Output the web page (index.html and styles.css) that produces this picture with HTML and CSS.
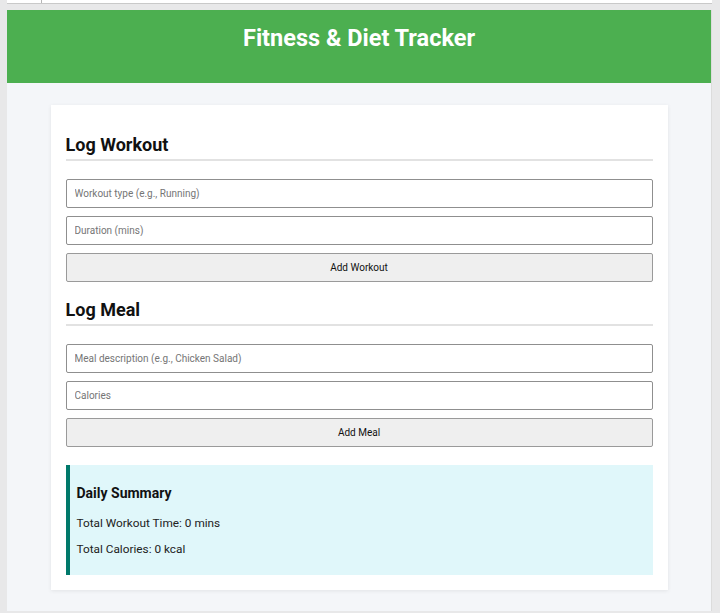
FILE: index.html
```html
<!DOCTYPE html>
<html lang="en">
<head>
<meta charset="utf-8">
<title>Fitness &amp; Diet Tracker</title>
<link rel="stylesheet" href="styles.css">
</head>
<body>
<div class="topstrip"><div class="topstrip-tab"></div></div>
<div class="frame">
  <header class="header">
    <h1>Fitness &amp; Diet Tracker</h1>
  </header>
  <main class="main">
    <section class="card">
      <h2 class="section-title">Log Workout</h2>
      <form class="form">
        <input class="field" type="text" placeholder="Workout type (e.g., Running)">
        <input class="field" type="text" placeholder="Duration (mins)">
        <button class="btn" type="button">Add Workout</button>
      </form>
      <h2 class="section-title">Log Meal</h2>
      <form class="form">
        <input class="field" type="text" placeholder="Meal description (e.g., Chicken Salad)">
        <input class="field" type="text" placeholder="Calories">
        <button class="btn" type="button">Add Meal</button>
      </form>
      <div class="summary">
        <h3 class="summary-title">Daily Summary</h3>
        <p class="summary-line">Total Workout Time: 0 mins</p>
        <p class="summary-line">Total Calories: 0 kcal</p>
      </div>
    </section>
  </main>
</div>
</body>
</html>
```

FILE: styles.css
```css
html, body {
  margin: 0;
  padding: 0;
}
body {
  background: #e8e8e9;
  font-family: Roboto, "Liberation Sans", Arial, sans-serif;
  color: #111;
  height: 613px;
  overflow: hidden;
}
.topstrip {
  margin: 0 8px 0 7px;
  height: 3px;
  background: #fff;
  border-bottom: 1px solid #c9c9c9;
  display: flex;
}
.topstrip-tab {
  width: 34px;
  border-right: 1px solid #b5b5b5;
}
.frame {
  margin: 6px 8px 0 7px;
  background: #f4f6f9;
  height: 601px;
  border-right: 1px solid #dcdcdc;
}
.header {
  background: #4caf50;
  height: 73px;
  box-sizing: border-box;
  padding-top: 14px;
  display: flex;
  justify-content: center;
  align-items: flex-start;
}
.header h1 {
  margin: 0;
  color: #fff;
  font-size: 23.5px;
  font-weight: 700;
  line-height: 29px;
}
.main {
  padding: 22px 0 0;
}
.card {
  width: 587px;
  margin: 0 auto;
  background: #fff;
  padding: 15px 15px 15px 15px;
  box-shadow: 0 1px 4px rgba(0, 0, 0, 0.08);
}
.section-title {
  margin: 14px 0 18px;
  font-size: 18px;
  font-weight: 700;
  line-height: 21px;
  padding-bottom: 4px;
  border-bottom: 2px solid #e2e2e2;
  color: #111;
}
.form {
  display: flex;
  flex-direction: column;
  gap: 8px;
  margin-bottom: 17px;
}
.field {
  box-sizing: border-box;
  width: 100%;
  height: 29px;
  margin: 0;
  padding: 0 8px;
  border: 1px solid #8f8f8f;
  border-radius: 2px;
  font-family: Roboto, "Liberation Sans", Arial, sans-serif;
  font-size: 10px;
  background: #fff;
}
.field::placeholder {
  color: #757575;
}
.btn {
  box-sizing: border-box;
  width: 100%;
  height: 29px;
  margin: 0;
  border: 1px solid #9a9a9a;
  border-radius: 2px;
  background: #efefef;
  font-family: Roboto, "Liberation Sans", Arial, sans-serif;
  font-size: 10px;
  color: #111;
}
.summary {
  margin-top: 18px;
  background: #e0f7fa;
  border-left: 4px solid #00796b;
  padding: 20px 7px 18px;
}
.summary-title {
  margin: 0 0 14px;
  font-size: 14px;
  font-weight: 700;
  line-height: 17px;
}
.summary-line {
  margin: 0 0 11px;
  font-size: 11.8px;
  line-height: 15px;
  color: #222;
}
.summary-line:last-child {
  margin-bottom: 0;
}
```
